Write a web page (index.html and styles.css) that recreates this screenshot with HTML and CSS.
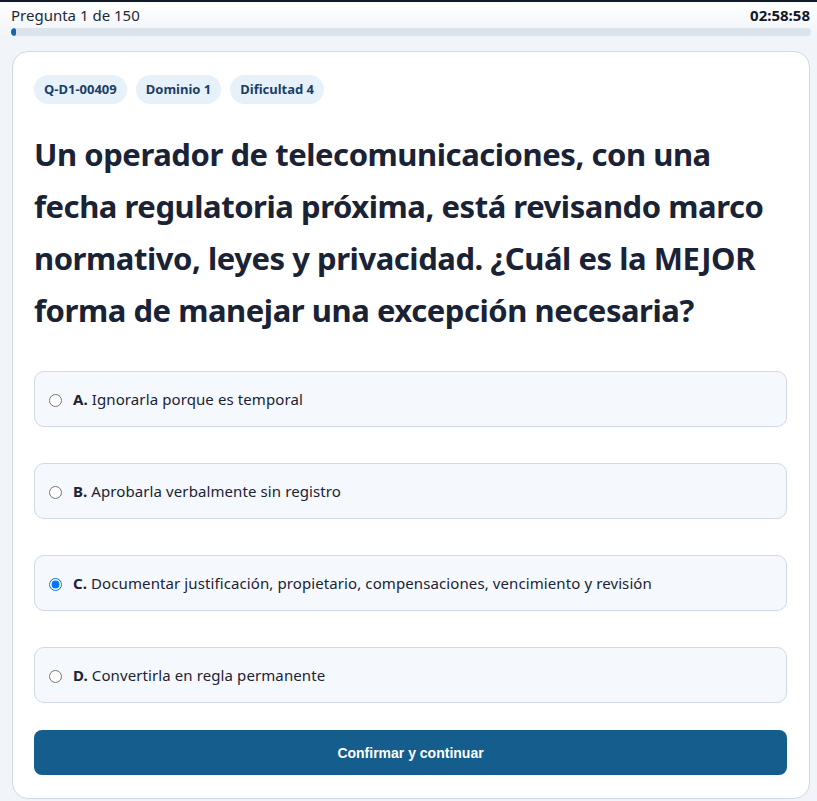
FILE: index.html
```html
<!DOCTYPE html>
<html lang="es">
<head>
  <meta charset="UTF-8" />
  <meta name="viewport" content="width=device-width, initial-scale=1.0" />
  <title>Simulador de examen</title>
  <link rel="stylesheet" href="styles.css">
</head>
<body>
  <header class="topbar">
    <div class="topbar-row">
      <span class="counter">Pregunta 1 de 150</span>
      <span class="timer">02:58:58</span>
    </div>
    <div class="progress"><div class="progress-fill" style="width: 0.67%"></div></div>
  </header>

  <main class="page">
    <section class="card">
      <div class="chips">
        <span class="chip">Q-D1-00409</span>
        <span class="chip">Dominio 1</span>
        <span class="chip">Dificultad 4</span>
      </div>

      <h1 class="question">Un operador de telecomunicaciones, con una fecha regulatoria próxima, está revisando marco normativo, leyes y privacidad. ¿Cuál es la MEJOR forma de manejar una excepción necesaria?</h1>

      <form class="answer-form">
        <div class="options">
          <label class="option">
            <input type="radio" name="answer" value="A" />
            <span><b>A.</b> Ignorarla porque es temporal</span>
          </label>
          <label class="option">
            <input type="radio" name="answer" value="B" />
            <span><b>B.</b> Aprobarla verbalmente sin registro</span>
          </label>
          <label class="option">
            <input type="radio" name="answer" value="C" checked />
            <span><b>C.</b> Documentar justificación, propietario, compensaciones, vencimiento y revisión</span>
          </label>
          <label class="option">
            <input type="radio" name="answer" value="D" />
            <span><b>D.</b> Convertirla en regla permanente</span>
          </label>
        </div>
        <button type="submit" class="confirm">Confirmar y continuar</button>
      </form>
    </section>
  </main>
</body>
</html>
```

FILE: styles.css
```css
* { box-sizing: border-box; }
body { margin: 0; background: #f1f5f9; font-family: "Noto Sans", "Open Sans", sans-serif; color: #1b2335; }

/* top bar with counter, timer and progress */
.topbar { border-top: 2px solid #0f1b2d; background: linear-gradient(#ffffff, #f1f5f9); padding: 4px 6px 0 11px; }
.topbar-row { display: flex; justify-content: space-between; align-items: center; height: 18px; }
.counter { font-size: 15px; color: #1f2937; }
.timer { font-size: 15px; font-weight: 700; color: #111827; padding-right: 1px; }
.progress { margin-top: 4px; height: 8px; background: #dbe3ec; border-radius: 4px; overflow: hidden; }
.progress-fill { height: 100%; background: #1867a8; border-radius: 4px; min-width: 5px; }

.page { padding: 15px 7px 2px 12px; }
.card { background: #fff; border: 1px solid #cfd8e3; border-radius: 16px; padding: 23px 22px 23px 21px; }

.chips { display: flex; gap: 9px; }
.chip { background: #e7f1fa; color: #1b3f66; font-size: 13px; font-weight: 700; padding: 5px 10px; border-radius: 15px; line-height: 19px; }

.question { font-size: 31px; line-height: 52px; font-weight: 700; letter-spacing: -0.45px; margin: 24px 0 35px; color: #1a2236; }

.answer-form { display: flex; flex-direction: column; gap: 27px; }
.options { display: flex; flex-direction: column; gap: 36px; }
.option { display: flex; align-items: center; gap: 11px; height: 56px; padding: 0 14px; background: #f5f8fc; border: 1px solid #d0d9e4; border-radius: 10px; font-size: 15px; letter-spacing: 0.1px; cursor: pointer; }
.option input { margin: 2px 0 0 0; width: 13px; height: 13px; }
.option b { font-weight: 700; }

.confirm { height: 45px; border: 0; border-radius: 8px; background: #155d8c; color: #fff; font-family: "Liberation Sans", Arial, sans-serif; font-size: 14px; font-weight: 700; cursor: pointer; }
```
